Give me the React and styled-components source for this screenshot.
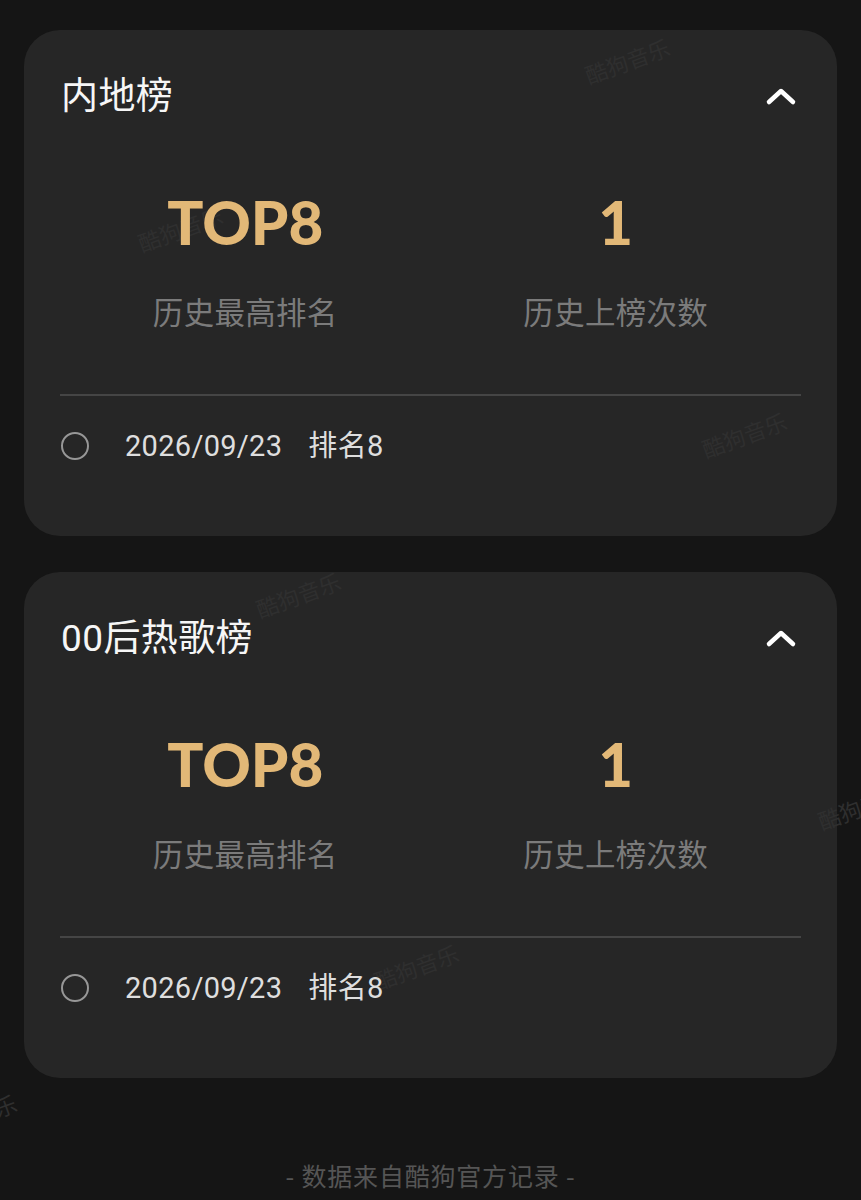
import React from 'react';
import styled, { createGlobalStyle } from 'styled-components';

const GlobalStyle = createGlobalStyle`
  html, body {
    margin: 0;
    padding: 0;
    background: #151515;
  }
  body {
    font-family: "Noto Sans CJK SC", "Noto Sans", sans-serif;
  }
`;

const Page = styled.div`
  position: relative;
  height: 1200px;
  padding: 30px 24px 0;
  box-sizing: border-box;
  display: flex;
  flex-direction: column;
  gap: 36px;
  overflow: hidden;
`;

const Card = styled.section`
  position: relative;
  background: #262626;
  border-radius: 36px;
  padding: 44px 36px 70px;
  overflow: hidden;
`;

const Header = styled.div`
  display: flex;
  align-items: center;
  justify-content: space-between;
  height: 44px;
`;

const Title = styled.h2`
  margin: 2px 0 0 1px;
  font-family: "Roboto", "Noto Sans CJK SC", sans-serif;
  font-size: 37px;
  font-weight: 400;
  line-height: 44px;
  letter-spacing: 0.4px;
  color: #f6f6f6;
`;

const Toggle = styled.button`
  border: 0;
  background: none;
  padding: 0;
  margin-right: 4px;
  display: flex;
  cursor: pointer;
`;

const Stats = styled.div`
  display: grid;
  grid-template-columns: 1fr 1fr;
  margin-top: 66px;
`;

const Stat = styled.div`
  display: flex;
  flex-direction: column;
  align-items: center;
`;

const Value = styled.div`
  position: relative;
  z-index: 3;
  font-family: "Lato", "Noto Sans", sans-serif;
  font-weight: 900;
  font-size: 60px;
  line-height: 76px;
  color: #e2b877;
`;

const Label = styled.div`
  margin-top: 31px;
  font-size: 30.5px;
  line-height: 40px;
  color: #7b7b7b;
  letter-spacing: 0.3px;
`;

const Divider = styled.hr`
  border: 0;
  height: 2px;
  background: #454545;
  margin: 63px 0 0;
`;

const Row = styled.div`
  display: flex;
  align-items: center;
  margin-top: 30px;
  height: 40px;
`;

const Dot = styled.span`
  width: 24px;
  height: 24px;
  border-radius: 50%;
  border: 2.5px solid #979797;
  margin-left: 1px;
  margin-right: 36px;
  flex-shrink: 0;
`;

const RowText = styled.span`
  position: relative;
  z-index: 3;
  font-family: "Roboto", "Noto Sans CJK SC", sans-serif;
  font-size: 29px;
  line-height: 40px;
  letter-spacing: 0.3px;
  color: #dedede;
  margin-right: ${(p) => p.$gap || 0}px;
`;

const Watermark = styled.span`
  position: absolute;
  z-index: 2;
  font-size: 22px;
  color: #2f2f2f;
  transform: rotate(-20deg);
  white-space: nowrap;
  pointer-events: none;
`;

const Footer = styled.div`
  margin-top: 43px;
  text-align: center;
  font-size: 25px;
  line-height: 36px;
  color: #555555;
  letter-spacing: 0.8px;
`;

const Chevron = () => (
  <svg width="32" height="20" viewBox="0 0 32 20" fill="none">
    <polyline
      points="4,16 16,5 28,16"
      stroke="#ffffff"
      strokeWidth="4.5"
      strokeLinecap="round"
      strokeLinejoin="round"
    />
  </svg>
);

const charts = [
  { title: '内地榜', best: 'TOP8', times: '1', date: '2026/09/23', rank: '排名8' },
  { title: '00后热歌榜', best: 'TOP8', times: '1', date: '2026/09/23', rank: '排名8' },
];

const marks = [
  { left: 583, top: 44 },
  { left: 136, top: 212 },
  { left: 700, top: 418 },
  { left: 254, top: 578 },
  { left: 372, top: 950 },
  { left: 816, top: 790 },
  { left: -70, top: 1100 },
];

const ChartCard = ({ chart }) => (
  <Card>
    <Header>
      <Title>{chart.title}</Title>
      <Toggle aria-label="收起">
        <Chevron />
      </Toggle>
    </Header>
    <Stats>
      <Stat>
        <Value>{chart.best}</Value>
        <Label>历史最高排名</Label>
      </Stat>
      <Stat>
        <Value>{chart.times}</Value>
        <Label>历史上榜次数</Label>
      </Stat>
    </Stats>
    <Divider />
    <Row>
      <Dot />
      <RowText $gap={26}>{chart.date}</RowText>
      <RowText>{chart.rank}</RowText>
    </Row>
  </Card>
);

export default function App() {
  return (
    <>
      <GlobalStyle />
      <Page>
        {charts.map((c) => (
          <ChartCard key={c.title} chart={c} />
        ))}
        <Footer>- 数据来自酷狗官方记录 -</Footer>
        {marks.map((m, i) => (
          <Watermark key={i} style={{ left: m.left, top: m.top }}>
            酷狗音乐
          </Watermark>
        ))}
      </Page>
    </>
  );
}
